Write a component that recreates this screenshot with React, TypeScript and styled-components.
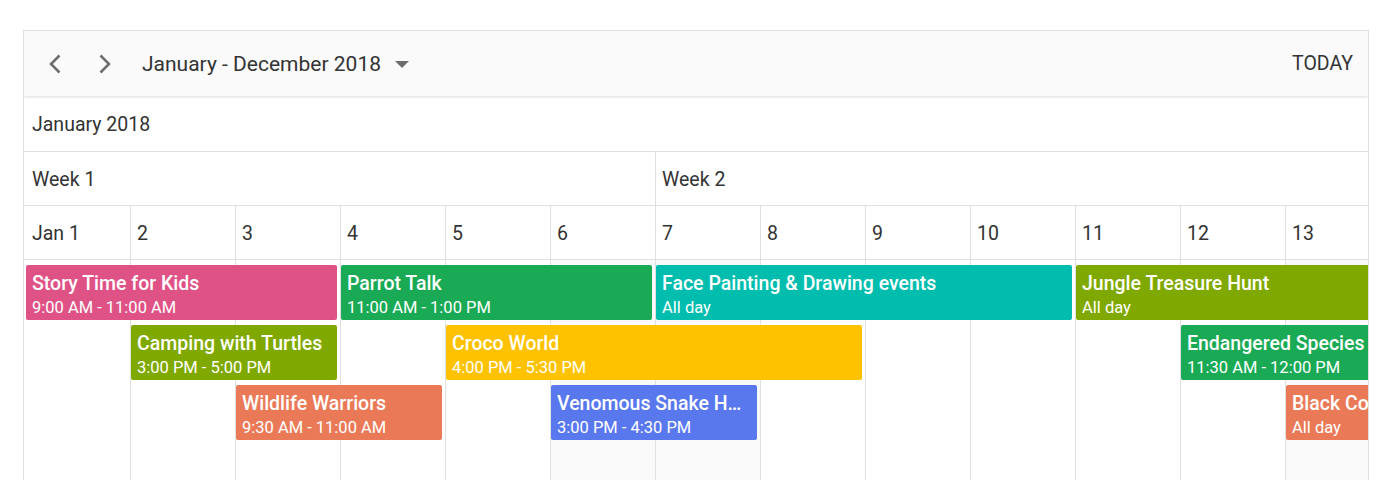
import React from 'react'
import styled, { createGlobalStyle } from 'styled-components'

const COL_W = 105
const DAYS = ['Jan 1', '2', '3', '4', '5', '6', '7', '8', '9', '10', '11', '12', '13']
const GRID_COLS = 14
const WEEKENDS = [5, 6, 12, 13]

interface CalEvent {
  title: string
  time: string
  color: string
  col: number
  span: number
  row: number
}

const events: CalEvent[] = [
  { title: 'Story Time for Kids', time: '9:00 AM - 11:00 AM', color: '#df5286', col: 0, span: 3, row: 0 },
  { title: 'Parrot Talk', time: '11:00 AM - 1:00 PM', color: '#1aaa55', col: 3, span: 3, row: 0 },
  { title: 'Face Painting & Drawing events', time: 'All day', color: '#00bdae', col: 6, span: 4, row: 0 },
  { title: 'Jungle Treasure Hunt', time: 'All day', color: '#7fa900', col: 10, span: 4, row: 0 },
  { title: 'Camping with Turtles', time: '3:00 PM - 5:00 PM', color: '#7fa900', col: 1, span: 2, row: 1 },
  { title: 'Croco World', time: '4:00 PM - 5:30 PM', color: '#fec200', col: 4, span: 4, row: 1 },
  { title: 'Endangered Species', time: '11:30 AM - 12:00 PM', color: '#1aaa55', col: 11, span: 2, row: 1 },
  { title: 'Wildlife Warriors', time: '9:30 AM - 11:00 AM', color: '#ea7a57', col: 2, span: 2, row: 2 },
  { title: 'Venomous Snake Hunting', time: '3:00 PM - 4:30 PM', color: '#5978ee', col: 5, span: 2, row: 2 },
  { title: 'Black Cobra Show', time: 'All day', color: '#ea7a57', col: 12, span: 2, row: 2 },
]

const GlobalStyle = createGlobalStyle`
  body {
    margin: 0;
    background: #fff;
    font-family: Roboto, "Liberation Sans", sans-serif;
  }
`

const Scheduler = styled.div`
  margin: 30px 0 0 23px;
  width: 1346px;
  height: 460px;
  border: 1px solid #e0e0e0;
  border-bottom: none;
  box-sizing: border-box;
  overflow: hidden;
  display: flex;
  flex-direction: column;
`

const Toolbar = styled.div`
  height: 65px;
  flex: none;
  background: #fafafa;
  box-shadow: 0 1px 3px rgba(0, 0, 0, 0.14);
  display: flex;
  align-items: center;
  padding: 0 15px 0 14px;
  position: relative;
  z-index: 2;
`

const NavButton = styled.button`
  width: 34px;
  height: 34px;
  margin-right: 16px;
  border: none;
  background: transparent;
  padding: 0;
  display: flex;
  align-items: center;
  justify-content: center;
  color: #6c6c6c;
`

const DateRange = styled.div`
  display: flex;
  align-items: center;
  gap: 14px;
  margin-left: 4px;
  font-size: 21px;
  color: #333;
`

const Caret = styled.span`
  width: 0;
  height: 0;
  border-left: 7px solid transparent;
  border-right: 7px solid transparent;
  border-top: 7px solid #6c6c6c;
  margin-top: 1px;
`

const TodayButton = styled.span`
  margin-left: auto;
  font-size: 19.5px;
  color: #333;
`

const Timeline = styled.div`
  flex: 1;
  overflow: hidden;
  padding-left: 2px;
`

const HeaderRow = styled.div<{ $height: number }>`
  display: flex;
  height: ${p => p.$height}px;
  border-bottom: 1px solid #e0e0e0;
  margin-left: -2px;
  padding-left: 2px;
  width: ${COL_W * GRID_COLS}px;
`

const HeaderCell = styled.div<{ $span: number }>`
  flex: none;
  width: ${p => p.$span * COL_W}px;
  box-sizing: border-box;
  border-right: 1px solid #e0e0e0;
  display: flex;
  align-items: center;
  padding: 1px 0 0 6px;
  font-size: 19.5px;
  color: #333;
`

const Content = styled.div`
  display: grid;
  grid-template-columns: repeat(${GRID_COLS}, ${COL_W}px);
  grid-template-rows: 0 repeat(3, 55px) 1fr;
  row-gap: 5px;
  height: 240px;
  margin-left: -2px;
  padding-left: 2px;
`

const DayColumn = styled.div<{ $col: number; $weekend: boolean }>`
  grid-column: ${p => p.$col + 1};
  grid-row: 1 / -1;
  border-right: 1px solid #e0e0e0;
  background: ${p => (p.$weekend ? '#f9f9f9' : '#fff')};
`

const Event = styled.div<{ $col: number; $span: number; $row: number; $color: string }>`
  grid-column: ${p => p.$col + 1} / span ${p => p.$span};
  grid-row: ${p => p.$row + 2};
  margin: 0 4px 0 0;
  min-width: 0;
  background: ${p => p.$color};
  border-radius: 2px;
  color: #fff;
  padding: 7px 10px 0 6px;
  box-sizing: border-box;
  overflow: hidden;
  z-index: 1;
`

const EventTitle = styled.div`
  font-size: 19.5px;
  font-weight: 500;
  line-height: 24px;
  white-space: nowrap;
  overflow: hidden;
  text-overflow: ellipsis;
`

const EventTime = styled.div`
  font-size: 16.5px;
  line-height: 24px;
  white-space: nowrap;
`

const Chevron = ({ dir }: { dir: 'left' | 'right' }) => (
  <svg width="18" height="22" viewBox="0 0 18 22" fill="none">
    <path
      d={dir === 'left' ? 'M13.5 2.5L5 11l8.5 8.5' : 'M4.5 2.5L13 11l-8.5 8.5'}
      stroke="currentColor"
      strokeWidth="2.5"
    />
  </svg>
)

export default function App() {
  return (
    <>
      <GlobalStyle />
      <Scheduler>
        <Toolbar>
          <NavButton>
            <Chevron dir="left" />
          </NavButton>
          <NavButton>
            <Chevron dir="right" />
          </NavButton>
          <DateRange>
            January - December 2018
            <Caret />
          </DateRange>
          <TodayButton>TODAY</TodayButton>
        </Toolbar>
        <Timeline>
          <HeaderRow $height={55}>
            <HeaderCell $span={GRID_COLS}>January 2018</HeaderCell>
          </HeaderRow>
          <HeaderRow $height={53}>
            <HeaderCell $span={6}>Week 1</HeaderCell>
            <HeaderCell $span={7}>Week 2</HeaderCell>
          </HeaderRow>
          <HeaderRow $height={53}>
            {DAYS.map(d => (
              <HeaderCell key={d} $span={1}>
                {d}
              </HeaderCell>
            ))}
          </HeaderRow>
          <Content>
            {Array.from({ length: GRID_COLS }, (_, i) => (
              <DayColumn key={i} $col={i} $weekend={WEEKENDS.includes(i)} />
            ))}
            {events.map(ev => (
              <Event key={ev.title} $col={ev.col} $span={ev.span} $row={ev.row} $color={ev.color}>
                <EventTitle>{ev.title}</EventTitle>
                <EventTime>{ev.time}</EventTime>
              </Event>
            ))}
          </Content>
        </Timeline>
      </Scheduler>
    </>
  )
}
